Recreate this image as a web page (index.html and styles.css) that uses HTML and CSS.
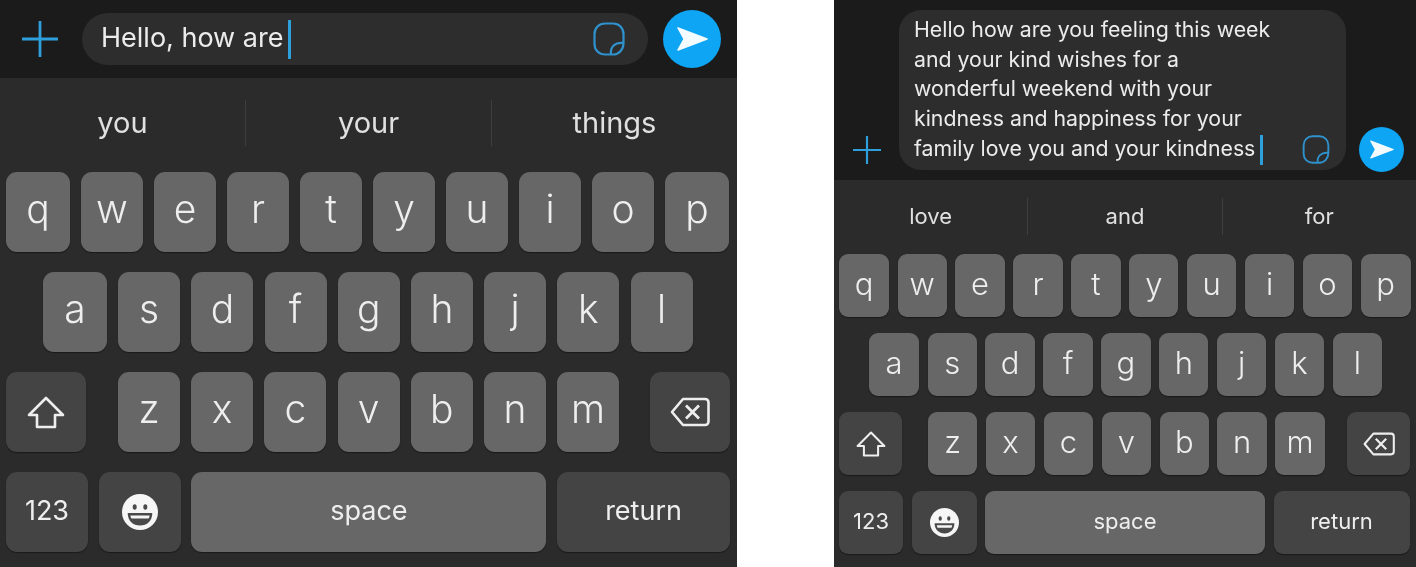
FILE: index.html
```html
<!DOCTYPE html>
<html lang="en">

<head>
    <meta charset="UTF-8">
    <meta name="viewport" content="width=device-width, initial-scale=1.0">
    <title>Message Composer</title>

    <link rel="stylesheet" href="styles.css">
</head>

<body>

    <svg class="defs" width="0" height="0">
        <symbol id="plus" viewBox="0 0 36 36">
            <path d="M18 0V36M0 18H36" fill="none" stroke="currentColor" stroke-width="2.8" />
        </symbol>
        <symbol id="sticker" viewBox="0 0 32 34">
            <path d="M20 32.500H12C6 32.500 1.500 28 1.500 22V12C1.500 6 6 1.500 12 1.500H20C26 1.500 30.500 6 30.500 12V21C30.500 27.500 26 32.500 20 32.500ZM18 32.500C17 25 22 20 30.500 21" fill="none" stroke="currentColor" stroke-width="2.200" />
        </symbol>
        <symbol id="send" viewBox="0 0 31 24">
            <path d="M1 1L30 12L1 23L7 12Z" fill="currentColor" stroke="currentColor" stroke-width="1.500" stroke-linejoin="round" />
        </symbol>
        <symbol id="shift" viewBox="0 0 38 33">
            <path d="M19 2L36 19H28V31H10V19H2Z" fill="none" stroke="currentColor" stroke-width="2.600" stroke-linejoin="round" />
        </symbol>
        <symbol id="backspace" viewBox="0 0 40 30">
            <path d="M13 2H35C37 2 38.500 3.500 38.500 5.500V24.500C38.500 26.500 37 28 35 28H13L2 15Z" fill="none" stroke="currentColor" stroke-width="2.600" stroke-linejoin="round" />
            <path d="M16 8.500L29 21.500M29 8.500L16 21.500" fill="none" stroke="currentColor" stroke-width="2.800" />
        </symbol>
        <symbol id="emoji" viewBox="0 0 36 36">
            <circle cx="18" cy="18" r="18" fill="currentColor" />
            <ellipse cx="12.700" cy="13" rx="2" ry="2.800" fill="#4a4a4a" />
            <ellipse cx="23.300" cy="13" rx="2" ry="2.800" fill="#4a4a4a" />
            <path d="M5.700 19H30.300C30.300 27 25 31.500 18 31.500C11 31.500 5.700 27 5.700 19Z" fill="#4a4a4a" />
            <path d="M8.500 21.500H27.500C27.500 23 27 24 26.500 24.500H9.500C9 24 8.500 23 8.500 21.500Z" fill="currentColor" />
        </symbol>
    </svg>

    <div class="screens">

        <section class="phone phone-large">
            <div class="composer">
                <svg class="plus-icon"><use href="#plus" /></svg>
                <div class="input-box">
                    <p class="input-text">Hello, how are<span class="caret"></span></p>
                    <svg class="sticker-icon"><use href="#sticker" /></svg>
                </div>
                <button class="send-btn"><svg class="send-icon"><use href="#send" /></svg></button>
            </div>
            <div class="keyboard">
                <ul class="suggestions">
                    <li>you</li>
                    <li>your</li>
                    <li>things</li>
                </ul>
                <div class="key-row row-top">
                    <span class="key key-edge">q</span><span class="key">w</span><span class="key">e</span><span class="key">r</span><span class="key">t</span><span class="key">y</span><span class="key">u</span><span class="key">i</span><span class="key">o</span><span class="key key-edge">p</span>
                </div>
                <div class="key-row row-home">
                    <span class="key key-edge">a</span><span class="key">s</span><span class="key">d</span><span class="key">f</span><span class="key">g</span><span class="key">h</span><span class="key">j</span><span class="key">k</span><span class="key">l</span>
                </div>
                <div class="key-row">
                    <span class="key key-dark key-icon key-shift"><svg class="shift-icon"><use href="#shift" /></svg></span>
                    <span class="key">z</span><span class="key">x</span><span class="key">c</span><span class="key">v</span><span class="key">b</span><span class="key">n</span><span class="key">m</span>
                    <span class="key key-dark key-icon key-delete"><svg class="backspace-icon"><use href="#backspace" /></svg></span>
                </div>
                <div class="key-row row-bottom">
                    <span class="key key-dark key-small key-numbers">123</span>
                    <span class="key key-dark key-icon key-emoji"><svg class="emoji-icon"><use href="#emoji" /></svg></span>
                    <span class="key key-small key-space">space</span>
                    <span class="key key-dark key-small key-return">return</span>
                </div>
            </div>
        </section>

        <section class="phone phone-small">
            <div class="composer">
                <svg class="plus-icon"><use href="#plus" /></svg>
                <div class="input-box">
                    <p class="input-text">Hello how are you feeling this week<br>and your kind wishes for a<br>wonderful weekend with your<br>kindness and happiness for your<br>family love you and your kindness<span class="caret"></span></p>
                    <svg class="sticker-icon"><use href="#sticker" /></svg>
                </div>
                <button class="send-btn"><svg class="send-icon"><use href="#send" /></svg></button>
            </div>
            <div class="keyboard">
                <ul class="suggestions">
                    <li>love</li>
                    <li>and</li>
                    <li>for</li>
                </ul>
                <div class="key-row row-top">
                    <span class="key key-edge">q</span><span class="key">w</span><span class="key">e</span><span class="key">r</span><span class="key">t</span><span class="key">y</span><span class="key">u</span><span class="key">i</span><span class="key">o</span><span class="key key-edge">p</span>
                </div>
                <div class="key-row row-home">
                    <span class="key key-edge">a</span><span class="key">s</span><span class="key">d</span><span class="key">f</span><span class="key">g</span><span class="key">h</span><span class="key">j</span><span class="key">k</span><span class="key">l</span>
                </div>
                <div class="key-row">
                    <span class="key key-dark key-icon key-shift"><svg class="shift-icon"><use href="#shift" /></svg></span>
                    <span class="key">z</span><span class="key">x</span><span class="key">c</span><span class="key">v</span><span class="key">b</span><span class="key">n</span><span class="key">m</span>
                    <span class="key key-dark key-icon key-delete"><svg class="backspace-icon"><use href="#backspace" /></svg></span>
                </div>
                <div class="key-row row-bottom">
                    <span class="key key-dark key-small key-numbers">123</span>
                    <span class="key key-dark key-icon key-emoji"><svg class="emoji-icon"><use href="#emoji" /></svg></span>
                    <span class="key key-small key-space">space</span>
                    <span class="key key-dark key-small key-return">return</span>
                </div>
            </div>
        </section>

    </div>

</body>
</html>
```

FILE: styles.css
```css
body {
    font-family: Inter, "Liberation Sans", sans-serif;
    background-color: #fff;
    margin: 0;
    padding: 0;
}

.defs {
    display: block;
    height: 0;
}

.screens {
    display: flex;
    justify-content: space-between;
    height: 567px;
    overflow: hidden;
}

/* the reference is a soft, upscaled capture */
.phone {
    display: flex;
    flex-direction: column;
    height: 567px;
    color: #ececec;
    filter: blur(0.4px);
}

.phone-large {
    width: 737px;
    --key-w: 62px;
    --edge-w: 64px;
    --key-h: 80px;
    --top-gap: 11px;
    --key-gap: 11.2px;
    --row-gap: 20px;
    --key-radius: 11px;
    --pad-l: 6px;
    --home-l: 43px;
    --pad-r: 7px;
    --shift-w: 80px;
    --shift-space: 20.8px;
    --bottom-gap: 10.7px;
    --num-w: 82px;
    --emoji-w: 82px;
    --space-w: 355px;
    --return-w: 173px;
    --letter-size: 39px;
    --letter-lift: 7px;
    --small-size: 27px;
}

.phone-small {
    width: 582px;
    --key-w: 49.4px;
    --edge-w: 50px;
    --key-h: 63px;
    --top-gap: 8.5px;
    --key-gap: 8.5px;
    --row-gap: 16px;
    --key-radius: 9px;
    --pad-l: 5px;
    --home-l: 35px;
    --pad-r: 6px;
    --shift-w: 63px;
    --shift-space: 17.5px;
    --bottom-gap: 8.5px;
    --num-w: 64px;
    --emoji-w: 65px;
    --space-w: 280px;
    --return-w: 136px;
    --letter-size: 31px;
    --letter-lift: 5px;
    --small-size: 22px;
}

/* top bar with the text field */

.composer {
    display: flex;
    background-color: #1b1b1c;
}

.phone-large .composer {
    height: 78px;
    align-items: center;
    padding-left: 22px;
}

.phone-small .composer {
    height: 180px;
    align-items: flex-end;
    padding-left: 19px;
    box-sizing: border-box;
    padding-bottom: 10px;
}

.plus-icon {
    flex: none;
    color: #2f9fdc;
}

.phone-large .plus-icon {
    width: 36px;
    height: 36px;
    margin-right: 24px;
}

.phone-small .plus-icon {
    width: 28px;
    height: 28px;
    margin-right: 18px;
    margin-bottom: 6px;
}

.input-box {
    display: flex;
    background-color: #2d2d2e;
    box-sizing: border-box;
}

.phone-large .input-box {
    width: 566px;
    height: 52px;
    border-radius: 26px;
    align-items: center;
    padding: 0 23px 0 19px;
}

.phone-small .input-box {
    width: 447px;
    height: 160px;
    border-radius: 22px;
    align-items: flex-end;
    padding: 5px 16px 5px 15px;
}

.input-text {
    flex: 1;
    margin: 0;
    white-space: nowrap;
}

.phone-large .input-text {
    font-size: 27px;
    padding-top: 2px;
}

.phone-small .input-text {
    font-size: 21.3px;
    line-height: 29.7px;
}

.caret {
    display: inline-block;
    background-color: #2f9fdc;
    vertical-align: middle;
}

.phone-large .caret {
    width: 3px;
    height: 39px;
    margin-left: 5px;
    margin-top: -2px;
}

.phone-small .caret {
    width: 2.5px;
    height: 30px;
    margin-left: 5px;
}

.sticker-icon {
    flex: none;
    color: #2f92cc;
}

.phone-large .sticker-icon {
    width: 32px;
    height: 34px;
}

.phone-small .sticker-icon {
    width: 28px;
    height: 29px;
    margin-bottom: 1px;
}

.send-btn {
    display: flex;
    align-items: center;
    justify-content: center;
    flex: none;
    border: none;
    padding: 0;
    border-radius: 50%;
    background-color: #0ea5f4;
    color: #fff;
}

.phone-large .send-btn {
    width: 58px;
    height: 58px;
    margin-left: 15px;
}

.phone-small .send-btn {
    width: 45px;
    height: 45px;
    margin-left: 13px;
    margin-bottom: -2px;
}

.send-icon {
    color: #f4fbff;
}

.phone-large .send-icon {
    width: 31px;
    height: 24px;
}

.phone-small .send-icon {
    width: 24px;
    height: 19px;
}

/* keyboard */

.keyboard {
    flex: 1;
    display: flex;
    flex-direction: column;
    gap: var(--row-gap);
    background-color: #2b2b2c;
    padding: 0 var(--pad-r) 0 var(--pad-l);
}

.suggestions {
    list-style-type: none;
    display: flex;
    align-items: center;
    margin: 0 0 calc(0px - var(--row-gap)) calc(0px - var(--pad-l));
    padding: 0;
}

.phone-large .suggestions {
    height: 94px;
    width: 737px;
    font-size: 29px;
}

.phone-small .suggestions {
    height: 74px;
    width: 582px;
    font-size: 22px;
}

.suggestions li {
    flex: 1;
    text-align: center;
    color: #e0e0e0;
    border-left: 1px solid #3e3e3f;
}

.suggestions li:first-child {
    border-left: none;
}

.phone-large .suggestions li {
    line-height: 46px;
    margin-top: -4px;
}

.phone-small .suggestions li {
    line-height: 37px;
    margin-top: -2px;
}

.key-row {
    display: flex;
    gap: var(--key-gap);
    height: var(--key-h);
}

.row-top {
    gap: var(--top-gap);
}

.row-bottom {
    gap: var(--bottom-gap);
}

.row-home {
    padding-left: calc(var(--home-l) - var(--pad-l));
}

.key {
    display: flex;
    align-items: center;
    justify-content: center;
    flex: none;
    width: var(--key-w);
    background-color: #676768;
    border-radius: var(--key-radius);
    box-shadow: 0 1px 1px #1a1a1a;
    font-size: var(--letter-size);
    font-weight: 300;
    color: #eeeeee;
    padding-bottom: var(--letter-lift);
    box-sizing: border-box;
}

.key-edge {
    width: var(--edge-w);
}

.key-dark {
    background-color: #444445;
}

.key-icon {
    padding-bottom: 0;
}

.key-small {
    font-size: var(--small-size);
    font-weight: 400;
    padding-bottom: 4px;
}

.key-shift {
    width: var(--shift-w);
    margin-right: var(--shift-space);
}

.key-delete {
    width: var(--shift-w);
    margin-left: auto;
}

.key-numbers {
    width: var(--num-w);
}

.key-emoji {
    width: var(--emoji-w);
}

.key-space {
    width: var(--space-w);
}

.key-return {
    width: var(--return-w);
}

.phone-large .shift-icon {
    width: 38px;
    height: 33px;
}

.phone-small .shift-icon {
    width: 30px;
    height: 26px;
}

.phone-large .backspace-icon {
    width: 40px;
    height: 30px;
}

.phone-small .backspace-icon {
    width: 32px;
    height: 24px;
}

.emoji-icon {
    color: #f6f6f6;
}

.phone-large .emoji-icon {
    width: 36px;
    height: 36px;
}

.phone-small .emoji-icon {
    width: 29px;
    height: 29px;
}
```
